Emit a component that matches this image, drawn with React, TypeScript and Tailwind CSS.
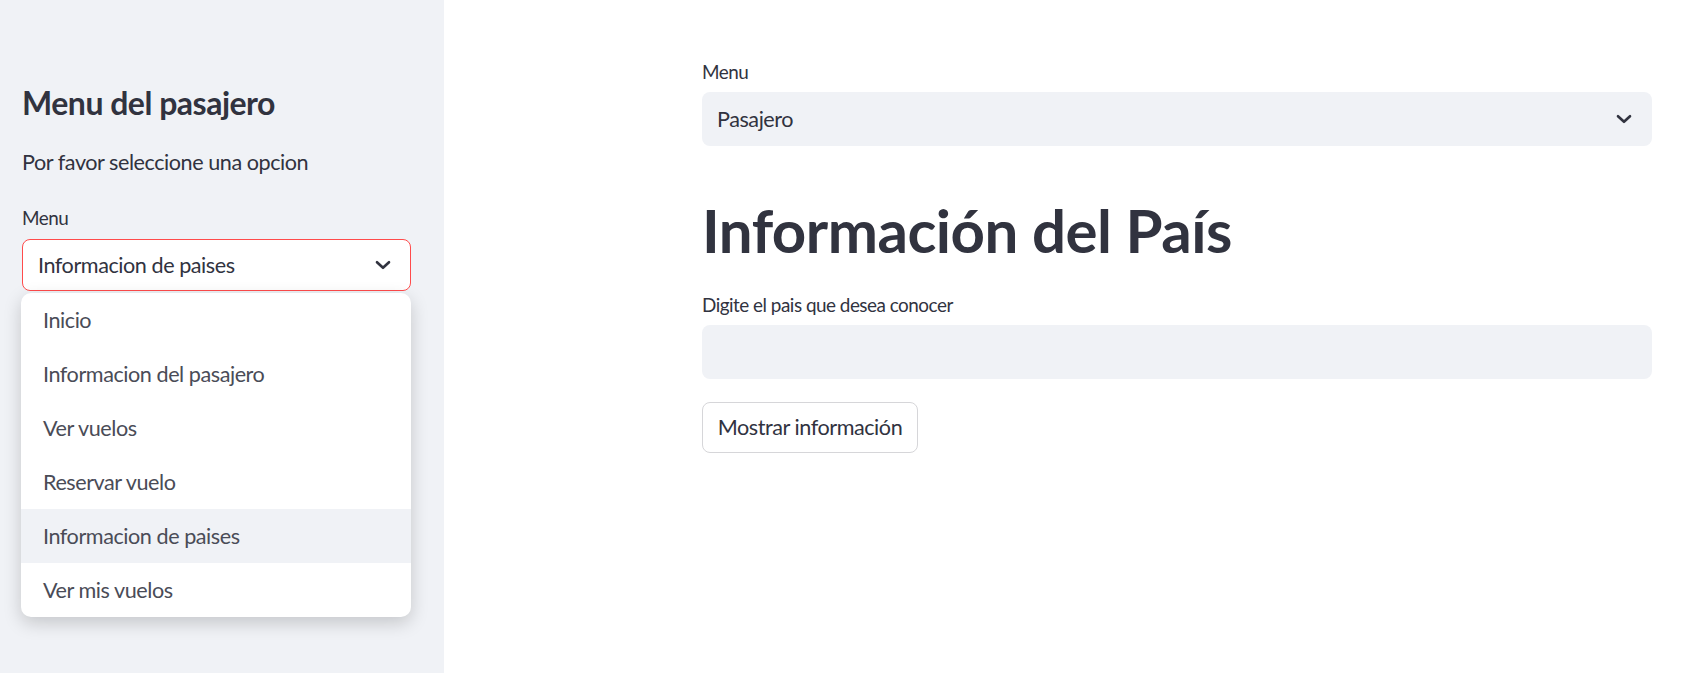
import React from 'react';

const options = [
  'Inicio',
  'Informacion del pasajero',
  'Ver vuelos',
  'Reservar vuelo',
  'Informacion de paises',
  'Ver mis vuelos',
];

const Chevron: React.FC = () => (
  <svg width="16" height="10" viewBox="0 0 16 10" fill="none" className="shrink-0">
    <path d="M2 2.2l6 5.6 6-5.6" stroke="#31333f" strokeWidth="2.6" strokeLinecap="round" strokeLinejoin="round" />
  </svg>
);

const App: React.FC = () => {
  const selected = 'Informacion de paises';

  return (
    <div
      className="flex h-[673px] w-full overflow-hidden bg-white text-[#31333f]"
      style={{ fontFamily: 'Lato, "Noto Sans", sans-serif' }}
    >
      {/* Sidebar */}
      <aside className="w-[444px] shrink-0 bg-[#f0f2f6] pl-[22px] pr-[33px] pt-[83px]">
        <h2 className="text-[32px] font-bold leading-[40px] tracking-[-0.5px]">Menu del pasajero</h2>
        <p className="mt-[24px] text-[21.6px] leading-[30px] tracking-[-0.45px]">Por favor seleccione una opcion</p>
        <label className="mt-[29px] block text-[18.9px] leading-[24px] tracking-[-0.5px]">Menu</label>

        <div className="relative mt-[9px]">
          <div className="flex h-[52px] items-center justify-between rounded-[8px] border border-[#ff4b4b] bg-white pl-[15px] pr-[19px]">
            <span className="text-[21.6px] tracking-[-0.45px]">{selected}</span>
            <Chevron />
          </div>

          {/* Open dropdown */}
          <ul className="absolute left-[-1px] right-0 top-[54px] z-10 overflow-hidden rounded-[10px] bg-white shadow-[0_6px_18px_rgba(0,0,0,0.18)]">
            {options.map((opt) => (
              <li
                key={opt}
                className={`flex h-[54px] items-center pl-[22px] text-[21.6px] tracking-[-0.45px] text-[#4a4c57] ${
                  opt === selected ? 'bg-[#f0f2f6]' : ''
                }`}
              >
                {opt}
              </li>
            ))}
          </ul>
        </div>
      </aside>

      {/* Main content */}
      <main className="flex-1 pl-[258px] pr-[32px] pt-[60px]">
        <div className="w-[950px]">
          <label className="block text-[18.9px] leading-[24px] tracking-[-0.5px]">Menu</label>
          <div className="mt-[8px] flex h-[54px] items-center justify-between rounded-[8px] bg-[#f0f2f6] pl-[15px] pr-[20px]">
            <span className="text-[21.6px] tracking-[-0.45px]">Pasajero</span>
            <Chevron />
          </div>

          <h1 className="mt-[48px] text-[60px] font-bold leading-[72px] tracking-[-0.5px]">Información del País</h1>

          <label className="mt-[27px] block text-[18.9px] leading-[24px] tracking-[-0.5px]">
            Digite el pais que desea conocer
          </label>
          <input
            type="text"
            className="mt-[8px] block h-[54px] w-full rounded-[8px] bg-[#f0f2f6] px-[15px] text-[21.6px] outline-none"
          />

          <button className="mt-[23px] flex h-[51px] w-[216px] items-center justify-center rounded-[8px] border border-[#d6d6d9] bg-white text-[21.6px] tracking-[-0.45px]">
            Mostrar información
          </button>
        </div>
      </main>
    </div>
  );
};

export default App;
